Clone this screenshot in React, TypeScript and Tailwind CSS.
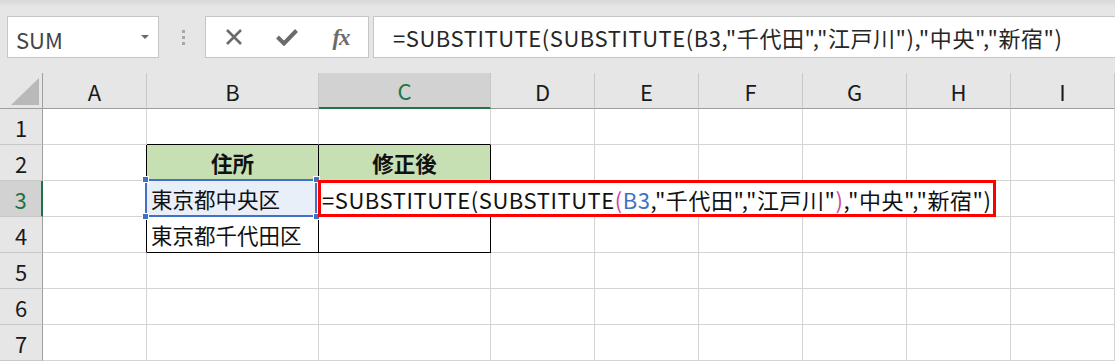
import React from "react";

const FONT = "font-['Noto_Sans_CJK_JP','Noto_Sans',sans-serif]";

function ColHeader({ label, selected }: { label: string; selected?: boolean }) {
  if (selected) {
    return (
      <div className="bg-[#d2d2d2] border-r border-r-[#c8c8c8] border-b-2 border-b-[#217346] flex items-center justify-center text-[22px] text-[#217346] leading-none">
        {label}
      </div>
    );
  }
  return (
    <div className="bg-[#e6e6e6] border-r border-r-[#c8c8c8] border-b border-b-[#9e9e9e] flex items-center justify-center text-[22px] text-[#1a1a1a] leading-none">
      {label}
    </div>
  );
}

function RowHeader({ label, selected }: { label: string; selected?: boolean }) {
  if (selected) {
    return (
      <div className="bg-[#d2d2d2] border-r-2 border-r-[#217346] border-b border-b-[#c8c8c8] flex items-center justify-center text-[22px] text-[#217346] leading-none">
        {label}
      </div>
    );
  }
  return (
    <div className="bg-[#e6e6e6] border-r border-r-[#9e9e9e] border-b border-b-[#c8c8c8] flex items-center justify-center text-[22px] text-[#1a1a1a] leading-none">
      {label}
    </div>
  );
}

function Cell() {
  return <div className="bg-white border-r border-r-[#d4d4d4] border-b border-b-[#d4d4d4]" />;
}

function Handle({ pos }: { pos: string }) {
  return <div className={`absolute w-[7px] h-[7px] bg-[#3f72c6] border border-white ${pos}`} />;
}

function Formula() {
  return (
    <span className="whitespace-nowrap text-[22px] leading-none text-[#111] tracking-[0.55px]">
      =SUBSTITUTE(SUBSTITUTE<span className="text-[#d2449a]">(</span>
      <span className="text-[#3f72c6]">B3</span>,"千代田","江戸川"
      <span className="text-[#d2449a]">)</span>,"中央","新宿")
    </span>
  );
}

function FormulaPlain() {
  return (
    <span className="whitespace-nowrap text-[22px] leading-none text-[#262626] tracking-[0.55px]">
      =SUBSTITUTE(SUBSTITUTE(B3,"千代田","江戸川"),"中央","新宿")
    </span>
  );
}

export default function App() {
  const rest = ["D", "E", "F", "G", "H", "I"];
  return (
    <div className={`w-[1115px] h-[361px] overflow-hidden bg-[#e6e6e6] ${FONT}`}>
      {/* Formula bar */}
      <div className="h-[73px] flex items-start pt-[16px] pl-[7px] bg-[linear-gradient(to_bottom,#d8d8d8_0px,#e6e6e6_7px)]">
        <div className="w-[152px] h-[42px] bg-white border border-[#c6c6c6] flex items-center justify-between pl-[8px] pr-[9px]">
          <span className="text-[22px] text-[#444] leading-none pt-[3px]">SUM</span>
          <svg width="8" height="4" viewBox="0 0 8 4">
            <polygon points="0,0 8,0 4,4" fill="#6a6a6a" />
          </svg>
        </div>
        <div className="w-[46px] h-[42px] flex flex-col items-center justify-center gap-[3px] pl-[2px]">
          <div className="w-[3px] h-[3px] bg-[#a8a8a8]" />
          <div className="w-[3px] h-[3px] bg-[#a8a8a8]" />
          <div className="w-[3px] h-[3px] bg-[#a8a8a8]" />
        </div>
        <div className="w-[164px] h-[42px] bg-white border border-[#c6c6c6] flex items-center">
          <div className="w-[54px] flex justify-center pl-[2px]">
            <svg width="18" height="18" viewBox="0 0 18 18">
              <path d="M2 2 L16 16 M16 2 L2 16" stroke="#6b6b6b" strokeWidth="2.6" />
            </svg>
          </div>
          <div className="w-[54px] flex justify-center">
            <svg width="22" height="18" viewBox="0 0 22 18">
              <path d="M1.5 9 L8 15.5 L20.5 2.5" stroke="#6b6b6b" strokeWidth="4" fill="none" strokeLinejoin="miter" />
            </svg>
          </div>
          <div className="w-[54px] flex justify-center">
            <span className="font-['Liberation_Serif',serif] italic font-bold text-[23px] text-[#6b6b6b] leading-none tracking-[-1px]">fx</span>
          </div>
        </div>
        <div className="ml-[4px] flex-1 h-[42px] bg-white border border-r-0 border-[#c6c6c6] flex items-center pl-[19px]">
          <FormulaPlain />
        </div>
      </div>

      {/* Sheet grid */}
      <div className="grid grid-cols-[43px_104px_172px_172px_104px_104px_104px_104px_104px_104px] grid-rows-[repeat(8,36px)]">
        {/* header row */}
        <div className="bg-[#e6e6e6] border-r border-r-[#9e9e9e] border-b border-b-[#9e9e9e] flex items-end justify-end pr-[3px] pb-[3px]">
          <svg width="28" height="27" viewBox="0 0 28 27">
            <polygon points="28,0 28,27 0,27" fill="#b9b9b9" />
          </svg>
        </div>
        <ColHeader label="A" />
        <ColHeader label="B" />
        <ColHeader label="C" selected />
        {rest.map((l) => (
          <ColHeader key={l} label={l} />
        ))}

        {/* row 1 */}
        <RowHeader label="1" />
        <Cell />
        <div className="bg-white border-r border-r-[#d4d4d4] border-b border-b-black" />
        <div className="bg-white border-r border-r-[#d4d4d4] border-b border-b-black" />
        {rest.map((l) => (
          <Cell key={l} />
        ))}

        {/* row 2 */}
        <RowHeader label="2" />
        <div className="bg-white border-r border-r-black border-b border-b-[#d4d4d4]" />
        <div className="bg-[#c6e0b4] border-r border-r-black border-b border-b-black flex items-center justify-center font-bold text-[21.5px] text-[#111] leading-none">
          住所
        </div>
        <div className="bg-[#c6e0b4] border-r border-r-black border-b border-b-black flex items-center justify-center font-bold text-[21.5px] text-[#111] leading-none">
          修正後
        </div>
        {rest.map((l) => (
          <Cell key={l} />
        ))}

        {/* row 3 */}
        <RowHeader label="3" selected />
        <div className="bg-white border-r border-r-black border-b border-b-[#d4d4d4]" />
        <div className="relative bg-[#e9eff9] border-r border-r-black border-b border-b-black flex items-center pl-[4px] text-[21.5px] text-[#111] leading-none">
          東京都中央区
          <div className="absolute left-[-2px] top-[-2px] w-[172px] h-[38px] border-2 border-[#3f72c6]" />
          <Handle pos="left-[-5px] top-[-5px]" />
          <Handle pos="right-[-2px] top-[-5px]" />
          <Handle pos="left-[-5px] bottom-[-4px]" />
          <Handle pos="right-[-2px] bottom-[-4px]" />
        </div>
        <div className="relative bg-white border-r border-r-black border-b border-b-black">
          <div className="absolute z-10 left-[-1px] top-[-1px] w-[678px] h-[37px] bg-white border-[3px] border-[#ff0000] flex items-center pl-[1px]">
            <Formula />
          </div>
        </div>
        {rest.map((l) => (
          <Cell key={l} />
        ))}

        {/* row 4 */}
        <RowHeader label="4" />
        <div className="bg-white border-r border-r-black border-b border-b-[#d4d4d4]" />
        <div className="bg-white border-r border-r-black border-b border-b-black flex items-center pl-[4px] text-[21.5px] text-[#111] leading-none">
          東京都千代田区
        </div>
        <div className="bg-white border-r border-r-black border-b border-b-black" />
        {rest.map((l) => (
          <Cell key={l} />
        ))}

        {/* rows 5-7 */}
        {["5", "6", "7"].map((r) => (
          <React.Fragment key={r}>
            <RowHeader label={r} />
            <Cell />
            <Cell />
            <Cell />
            {rest.map((l) => (
              <Cell key={l} />
            ))}
          </React.Fragment>
        ))}
      </div>
    </div>
  );
}
